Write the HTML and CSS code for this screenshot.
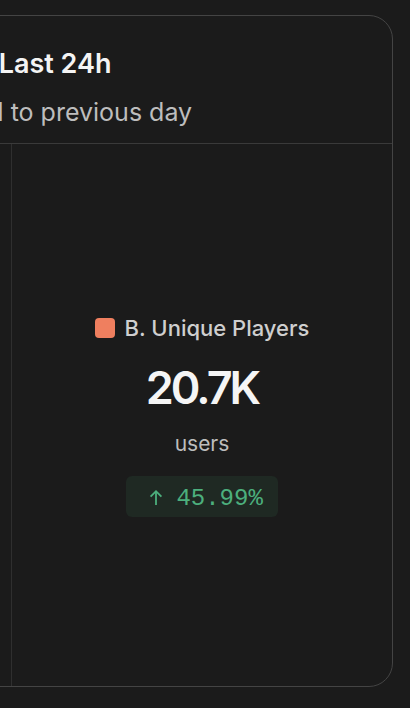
FILE: index.html
```html
<!DOCTYPE html>
<html lang="en">
<head>
    <meta charset="UTF-8">
    <meta name="viewport" content="width=device-width, initial-scale=1.0">
    <title>Players - Last 24h</title>
    <link rel="stylesheet" href="styles.css">
</head>
<body>
    <div class="page">
        <div class="card">
            <div class="card-header">
                <h2 class="card-title">Players · Last 24h</h2>
                <p class="card-subtitle">Compared to previous day</p>
            </div>

            <div class="card-body">
                <div class="panel panel-side"></div>

                <div class="panel panel-main">
                    <div class="legend">
                        <span class="legend-swatch"></span>
                        <span class="legend-label">B. Unique Players</span>
                    </div>
                    <div class="metric-value">20.7K</div>
                    <div class="metric-unit">users</div>
                    <div class="metric-change">
                        <svg class="arrow" width="14" height="16" viewBox="0 0 14 16" fill="none" stroke="currentColor" stroke-width="1.8">
                            <path d="M7 16V2.2"/>
                            <path d="M1.6 7.6L7 2.2l5.4 5.4"/>
                        </svg> 45.99%
                    </div>
                </div>
            </div>
        </div>
    </div>
</body>
</html>
```

FILE: styles.css
```css
* {
    margin: 0;
    padding: 0;
    box-sizing: border-box;
    font-family: Inter, "Noto Sans", sans-serif;
}

body {
    background-color: #1b1b1b;
    color: #f2f2f2;
    overflow: hidden;
}

.page {
    padding: 15px 17px 21px 0;
}

/* the card is wider than the window, its left part scrolls off screen */
.card {
    margin-left: -145px;
    height: 672px;
    border: 1px solid #444;
    border-radius: 24px;
    display: flex;
    flex-direction: column;
}

.card-header {
    padding: 30px 24px 15px;
    border-bottom: 1px solid #3a3a3a;
}

.card-title {
    font-size: 27px;
    line-height: 36px;
    font-weight: 600;
    color: #f4f4f4;
    white-space: nowrap;
}

.card-subtitle {
    margin-top: 14px;
    font-size: 25px;
    line-height: 32px;
    color: #bdbdbd;
    white-space: nowrap;
}

.card-body {
    flex: 1;
    display: grid;
    grid-template-columns: 156px 1fr;
}

.panel-side {
    border-right: 1px solid #2f2f2f;
}

.panel-main {
    display: flex;
    flex-direction: column;
    align-items: center;
    justify-content: center;
    padding-top: 3px;
}

.legend {
    display: flex;
    align-items: center;
    gap: 10px;
    height: 24px;
}

.legend-swatch {
    width: 20px;
    height: 20px;
    border-radius: 4px;
    background: #ef7f5f;
}

.legend-label {
    font-size: 22px;
    line-height: 24px;
    font-weight: 500;
    color: #cfcfcf;
}

.metric-value {
    margin-top: 21px;
    font-size: 45px;
    line-height: 54px;
    font-weight: 600;
    letter-spacing: -3px;
    color: #f5f5f5;
}

.metric-unit {
    margin-top: 15px;
    font-size: 21px;
    line-height: 28px;
    color: #bdbdbd;
}

.metric-change {
    margin-top: 18px;
    width: 152px;
    height: 41px;
    padding: 9px 0 0 23px;
    border-radius: 6px;
    background: #1f2923;
    font-family: "Liberation Mono", "DejaVu Sans Mono", monospace;
    font-size: 24px;
    line-height: 28px;
    color: #4caf7d;
    white-space: nowrap;
}

.metric-change .arrow {
    margin-right: -1px;
}
```
